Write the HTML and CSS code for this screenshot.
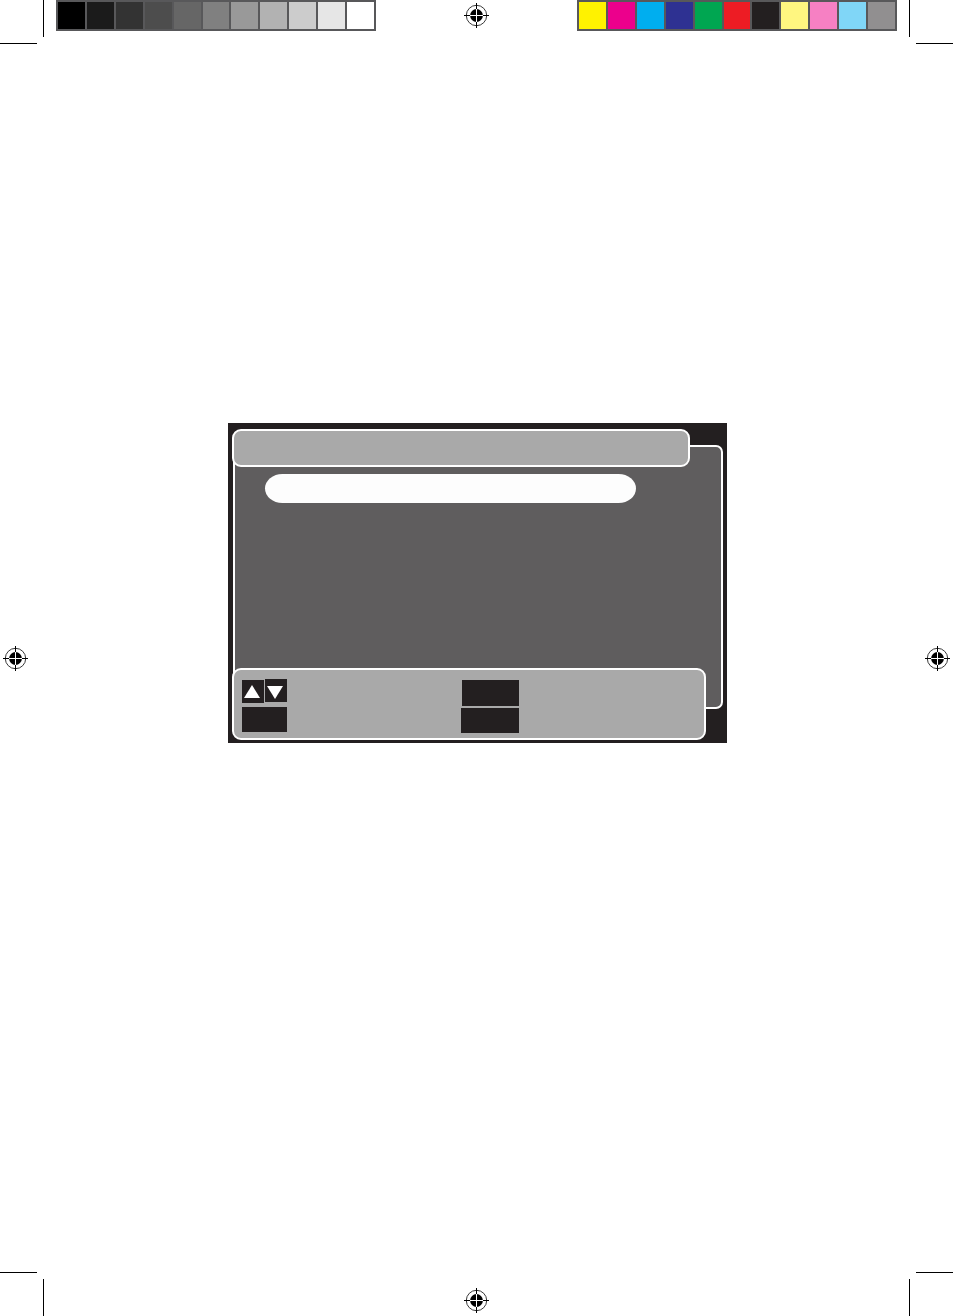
FILE: index.html
```
<!DOCTYPE html>
<html lang="en">
<head>
<meta charset="utf-8">
<title>Print proof</title>
<link rel="stylesheet" href="styles.css">
</head>
<body>
<svg class="defs" width="0" height="0" aria-hidden="true">
  <symbol id="corner" viewBox="0 0 44 44">
    <path d="M43 0h1v37h-1zM0 43h37v1H0z"/>
  </symbol>
  <symbol id="register" viewBox="0 0 25 25">
    <circle cx="12.5" cy="12.5" r="10.2" fill="none" stroke="#222" stroke-width="0.9"/>
    <circle cx="12.5" cy="12.5" r="6.4"/>
    <path d="M12 0h1v25h-1zM0 12h25v1H0z"/>
    <path d="M12 6h1v13h-1zM6 12h13v1H6z" fill="#fff"/>
  </symbol>
</svg>
<header class="edge edge-top">
  <svg class="corner"><use href="#corner"/></svg>
  <div class="bars">
    <div class="swatches">
      <span class="k100"></span><span class="k90"></span><span class="k80"></span><span class="k70"></span><span class="k60"></span><span class="k50"></span><span class="k40"></span><span class="k30"></span><span class="k20"></span><span class="k10"></span><span class="k0"></span>
    </div>
    <svg class="register"><use href="#register"/></svg>
    <div class="swatches">
      <span class="yellow"></span><span class="magenta"></span><span class="cyan"></span><span class="blue"></span><span class="green"></span><span class="red"></span><span class="black"></span><span class="light-yellow"></span><span class="light-magenta"></span><span class="light-cyan"></span><span class="gray"></span>
    </div>
  </div>
  <svg class="corner flip-x"><use href="#corner"/></svg>
</header>
<main class="sheet">
  <svg class="register"><use href="#register"/></svg>
  <section class="screen">
    <div class="screen-body"><div class="selection"></div></div>
    <div class="screen-title"></div>
    <div class="screen-keys">
      <div class="key-column">
        <div class="arrows">
          <svg class="arrow arrow-up" viewBox="0 0 22 23"><path d="M10 5L18 18H2z"/></svg>
          <svg class="arrow" viewBox="0 0 22 23"><path d="M2 7H18L10 20z"/></svg>
        </div>
        <span class="key"></span>
      </div>
      <div class="key-column key-column-wide">
        <span class="key key-tall"></span>
        <span class="key key-wide"></span>
      </div>
    </div>
  </section>
  <svg class="register"><use href="#register"/></svg>
</main>
<footer class="edge edge-bottom">
  <svg class="corner flip-y"><use href="#corner"/></svg>
  <svg class="register"><use href="#register"/></svg>
  <svg class="corner flip-xy"><use href="#corner"/></svg>
</footer>
</body>
</html>
```
FILE: styles.css
```
* { box-sizing: border-box; }

body {
  margin: 0;
  min-height: 100vh;
  display: flex;
  flex-direction: column;
  background: #fff;
  font-family: "Liberation Sans", Arial, sans-serif;
}

svg { display: block; flex: none; }
.defs { position: absolute; }

/* Printer's marks */
.corner { width: 44px; height: 44px; }
.flip-x { transform: scaleX(-1); }
.flip-y { transform: scaleY(-1); }
.flip-xy { transform: scale(-1, -1); }
.register { width: 25px; height: 25px; }

.edge {
  display: flex;
  justify-content: space-between;
}
.edge-top .register { margin-top: 3px; }
.edge-bottom .register { margin-top: 16px; }

.bars {
  flex: 1;
  display: flex;
  justify-content: space-between;
  align-items: flex-start;
  padding: 0 12px;
}
.swatches {
  flex: 0 1 320px;
  height: 31px;
  display: flex;
  gap: 2px;
  padding: 2px;
  background: #58585a;
}
.swatches span { flex: 1; }

.k100 { background: #000; }
.k90 { background: #1b1b1b; }
.k80 { background: #333; }
.k70 { background: #4d4d4d; }
.k60 { background: #666; }
.k50 { background: #808080; }
.k40 { background: #999; }
.k30 { background: #b2b2b2; }
.k20 { background: #ccc; }
.k10 { background: #e6e6e6; }
.k0 { background: #fff; }
.yellow { background: #fff200; }
.magenta { background: #ec008c; }
.cyan { background: #00aeef; }
.blue { background: #2e3192; }
.green { background: #00a651; }
.red { background: #ed1c24; }
.black { background: #231f20; }
.light-yellow { background: #fff680; }
.light-magenta { background: #f680c3; }
.light-cyan { background: #80d6f7; }
.gray { background: #918f90; }

.sheet {
  flex: 1;
  display: flex;
  align-items: center;
  padding: 0 3px;
}

/* On-screen menu */
.screen {
  flex: 1;
  align-self: flex-start;
  margin: 379px 198px 0 200px;
  padding: 6px 4px 3px;
  display: grid;
  grid-template-rows: 16px 22px 201px 41px 31px;
  background: #231f20;
}
.screen-title,
.screen-body,
.screen-keys {
  grid-column: 1;
  border: 2px solid #fff;
  border-radius: 9px;
}
.screen-title {
  grid-row: 1 / 3;
  margin-right: 33px;
  background: #a9a9a9;
}
.screen-body {
  grid-row: 2 / 5;
  margin-left: 1px;
  padding: 27px 85px 0 30px;
  border-radius: 7px;
  background: #5f5d5e;
}
.selection {
  height: 29px;
  border-radius: 18px / 15px;
  background: #fdfdfd;
}
.screen-keys {
  grid-row: 4 / 6;
  margin-right: 17px;
  padding: 9px 8px 0;
  display: grid;
  grid-template-columns: 219px 58px;
  align-items: start;
  background: #a9a9a9;
}
.key-column {
  display: flex;
  flex-direction: column;
  gap: 4px;
}
.key-column-wide {
  align-items: flex-end;
  gap: 2px;
  padding-top: 1px;
}
.arrows {
  display: flex;
  align-items: flex-start;
  gap: 1px;
  height: 24px;
}
.arrow {
  width: 22px;
  height: 23px;
  background: #231f20;
  fill: #fff;
}
.arrow-up { align-self: flex-end; }
.key {
  width: 45px;
  height: 25px;
  background: #231f20;
}
.key-tall { width: 57px; height: 26px; }
.key-wide { width: 58px; }
```
